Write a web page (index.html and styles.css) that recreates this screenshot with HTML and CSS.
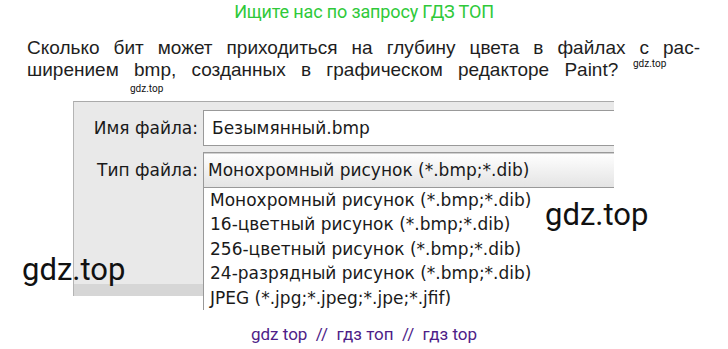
FILE: index.html
```html
<!DOCTYPE html>
<html lang="ru">
<head>
    <meta charset="UTF-8">
    <title>ГДЗ ТОП</title>
    <link rel="stylesheet" href="styles.css">
</head>
<body>
<div class="page">

    <!-- рекламная строка сверху -->
    <div class="ad-top">Ищите нас по запросу ГДЗ ТОП</div>

    <!-- текст задания -->
    <div class="task">
        <span class="line line-first">Сколько бит может приходиться на глубину цвета в файлах с рас-</span>
        <span class="line line-last">ширением bmp, созданных в графическом редакторе Paint?</span>
    </div>

    <!-- окно сохранения файла -->
    <div class="dialog">
        <div class="row">
            <div class="label">Имя файла:</div>
            <div class="field">Безымянный.bmp</div>
        </div>
        <div class="row">
            <div class="label">Тип файла:</div>
            <div class="select">
                Монохромный рисунок (*.bmp;*.dib)
                <ul class="options">
                    <li>Монохромный рисунок (*.bmp;*.dib)</li>
                    <li>16-цветный рисунок (*.bmp;*.dib)</li>
                    <li>256-цветный рисунок (*.bmp;*.dib)</li>
                    <li>24-разрядный рисунок (*.bmp;*.dib)</li>
                    <li>JPEG (*.jpg;*.jpeg;*.jpe;*.jfif)</li>
                </ul>
            </div>
        </div>
        <div class="dialog-bottom"></div>
    </div>

    <div class="ad-bottom">gdz top &nbsp;//&nbsp; гдз топ &nbsp;//&nbsp; гдз top</div>

    <!-- водяные знаки -->
    <span class="mark mark-small mark-1">gdz.top</span>
    <span class="mark mark-small mark-2">gdz.top</span>
    <span class="mark mark-big mark-3">gdz.top</span>
    <span class="mark mark-big mark-4">gdz.top</span>
</div>
</body>
</html>
```

FILE: styles.css
```css
body {
    margin: 0;
    padding: 0;
    background: #fff;
    font-family: "Liberation Sans", Arial, sans-serif;
}

.page {
    position: relative;
    width: 728px;
    height: 349px;
    overflow: hidden;
}

.ad-top {
    height: 24px;
    line-height: 24px;
    text-align: center;
    font-family: Roboto, sans-serif;
    font-size: 18px;
    letter-spacing: -0.15px;
    color: #2fc93a;
}

/* задание */
.task {
    margin: 13px 0 0 27px;
    width: 673px;
    font-size: 19px;
    line-height: 22px;
    color: #1e1e1e;
}

.task .line {
    display: block;
    text-align: left;
}

.task .line-first {
    text-align: justify;
    text-align-last: justify;
}

.task .line-last {
    word-spacing: 10px;
}

/* окно */
.dialog {
    position: relative;
    display: flex;
    flex-direction: column;
    gap: 6px;
    box-sizing: border-box;
    margin: 20px 0 0 73px;
    padding-top: 8px;
    width: 541px;
    height: 195px;
    background: #e9e9e9;
    border-top: 1px solid #aaa;
    border-left: 1px solid #b4b4b4;
    font-family: "DejaVu Sans", sans-serif;
    font-size: 17px;
    color: #1a1a1a;
}

.row {
    display: grid;
    grid-template-columns: 129px 1fr;
    align-items: center;
}

.label {
    text-align: right;
    padding-right: 5px;
}

.field,
.select {
    box-sizing: border-box;
    height: 36px;
    line-height: 34px;
    border: 1px solid #999;
    border-right: none;
    white-space: nowrap;
}

.field {
    background: #fff;
    padding-left: 8px;
}

.select {
    position: relative;
    padding-left: 4px;
    background: linear-gradient(#fff, #e4e4e4);
    box-shadow: inset 0 1px 0 #d0d0d0;
}

.options {
    position: absolute;
    top: 35px;
    left: -1px;
    right: 0;
    height: 122px;
    margin: 0;
    padding: 0 0 0 6px;
    list-style: none;
    background: #fff;
    border-left: 1px solid #999;
    line-height: 24.4px;
}

.dialog-bottom {
    margin-top: auto;
    height: 12px;
    background: #d6d6d6;
}

.ad-bottom {
    margin-top: 28px;
    text-align: center;
    font-family: Roboto, sans-serif;
    font-size: 17px;
    color: #4e1d88;
}

/* водяные знаки */
.mark {
    position: absolute;
    font-family: Roboto, sans-serif;
    color: #111;
    white-space: nowrap;
}

.mark-small {
    font-size: 10px;
}

.mark-1 {
    left: 633px;
    top: 58px;
}

.mark-2 {
    left: 130px;
    top: 83px;
}

.mark-big {
    font-size: 31px;
}

.mark-3 {
    left: 545px;
    top: 196px;
}

.mark-4 {
    left: 22px;
    top: 251px;
}
```
